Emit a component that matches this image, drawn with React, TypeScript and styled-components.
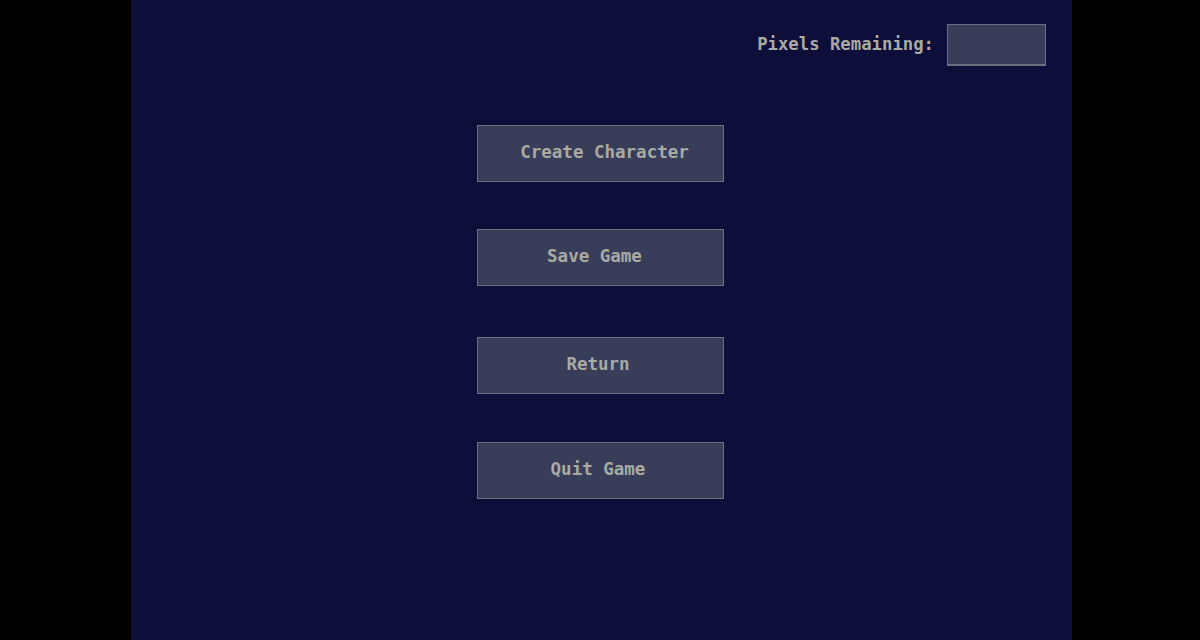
import React from "react";
import styled, { createGlobalStyle } from "styled-components";

const Global = createGlobalStyle`
  html, body { margin: 0; padding: 0; background: #000; height: 100%; }
  #root { height: 100%; }
`;

const Screen = styled.div`
  width: 1200px;
  height: 640px;
  background: #000;
  padding-left: 131px;
  box-sizing: border-box;
  overflow: hidden;
`;

const Panel = styled.div`
  width: 941px;
  height: 640px;
  background: #0d0f3a;
  display: flex;
  flex-direction: column;
  font-family: "DejaVu Sans Mono", "Liberation Mono", monospace;
  font-weight: bold;
  color: #a9aaa2;
`;

const Header = styled.div`
  display: flex;
  justify-content: flex-end;
  align-items: center;
  gap: 13px;
  padding: 24px 26px 0 0;
`;

const Label = styled.span`
  font-size: 17.3px;
  padding-bottom: 2px;
`;

const Counter = styled.div`
  width: 99px;
  height: 42px;
  box-sizing: border-box;
  background: #383d5a;
  border: 1px solid #6b6f82;
  border-bottom-width: 2px;
`;

const Menu = styled.div`
  display: flex;
  flex-direction: column;
  align-items: center;
  padding-top: 59px;
  padding-right: 2px;
`;

const MenuButton = styled.button<{ $gap: number; $shift: number }>`
  width: 247px;
  height: 57px;
  margin-top: ${(p) => p.$gap}px;
  box-sizing: border-box;
  background: #383d5a;
  border: 1px solid #6b6f82;
  color: #a9aaa2;
  font-family: inherit;
  font-weight: bold;
  font-size: 17.5px;
  padding: 0 ${(p) => Math.max(0, -p.$shift)}px 4px ${(p) => Math.max(0, p.$shift)}px;
  display: flex;
  align-items: center;
  justify-content: center;
  cursor: pointer;
`;

const items = [
  { label: "Create Character", gap: 0, shift: 8 },
  { label: "Save Game", gap: 47, shift: -12 },
  { label: "Return", gap: 51, shift: -5 },
  { label: "Quit Game", gap: 48, shift: -5 },
];

export default function App() {
  return (
    <>
      <Global />
      <Screen>
        <Panel>
          <Header>
            <Label>Pixels Remaining:</Label>
            <Counter />
          </Header>
          <Menu>
            {items.map((it) => (
              <MenuButton key={it.label} $gap={it.gap} $shift={it.shift}>
                {it.label}
              </MenuButton>
            ))}
          </Menu>
        </Panel>
      </Screen>
    </>
  );
}
